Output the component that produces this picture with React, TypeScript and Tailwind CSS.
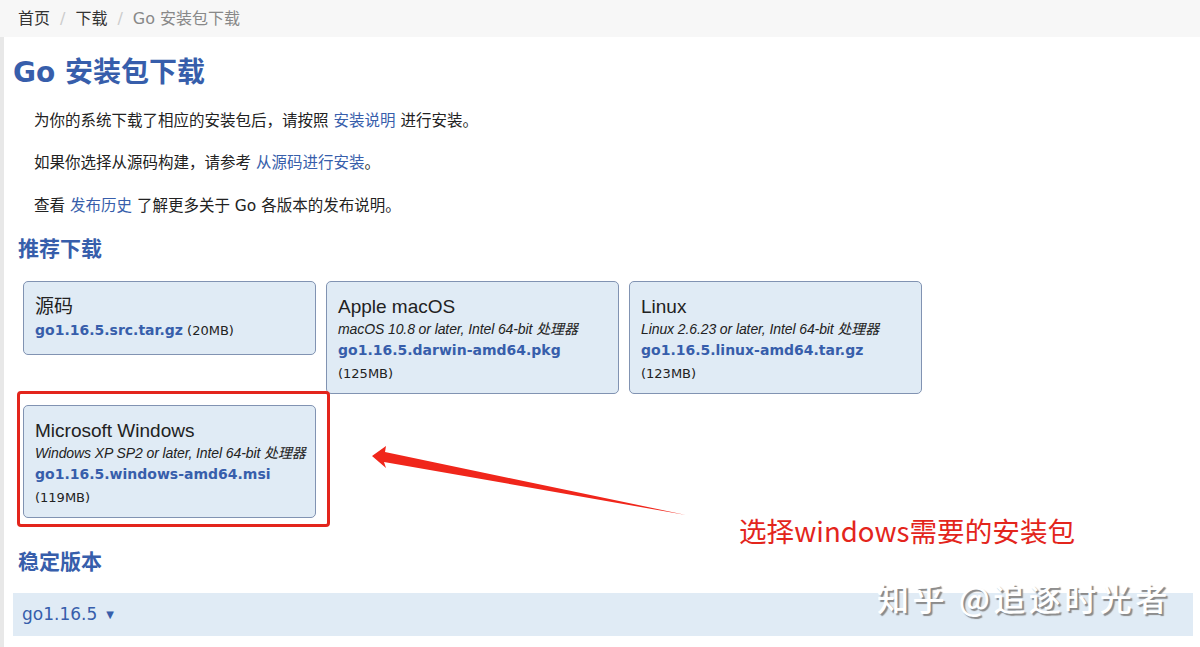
const sans = "font-['Tahoma','DejaVu_Sans','Noto_Sans_CJK_SC',sans-serif]";

type Pkg = {
  os: string;
  note?: string;
  file: string;
  size: string;
  inline?: boolean;
};

const featured: Pkg[] = [
  { os: "源码", file: "go1.16.5.src.tar.gz", size: "(20MB)", inline: true },
  {
    os: "Apple macOS",
    note: "macOS 10.8 or later, Intel 64-bit 处理器",
    file: "go1.16.5.darwin-amd64.pkg",
    size: "(125MB)",
  },
  {
    os: "Linux",
    note: "Linux 2.6.23 or later, Intel 64-bit 处理器",
    file: "go1.16.5.linux-amd64.tar.gz",
    size: "(123MB)",
  },
];

const windows: Pkg = {
  os: "Microsoft Windows",
  note: "Windows XP SP2 or later, Intel 64-bit 处理器",
  file: "go1.16.5.windows-amd64.msi",
  size: "(119MB)",
};

function DownloadCard({ pkg }: { pkg: Pkg }) {
  return (
    <div
      className={`w-[293px] self-start rounded-[5px] border border-[#8193b2] bg-[#e0ebf5] px-[11px] pt-[13px] text-[#222] ${
        pkg.inline ? "pb-[12px]" : "pb-[8px]"
      }`}
    >
      <div className="font-['Liberation_Sans','Noto_Sans_CJK_SC',sans-serif] text-[19px] leading-[24px]">
        {pkg.os}
      </div>
      {pkg.note && (
        <div className="whitespace-nowrap font-['Liberation_Sans','Noto_Sans_CJK_SC',sans-serif] text-[14px] italic leading-[20px] tracking-[-0.1px]">
          {pkg.note}
        </div>
      )}
      <div className="text-[13px] leading-[22px]">
        <a className="text-[14px] font-bold text-[#375eab]">{pkg.file}</a>
        {pkg.inline ? <span> {pkg.size}</span> : <div className="pt-[1px]">{pkg.size}</div>}
      </div>
    </div>
  );
}

export default function App() {
  return (
    <div className={`relative h-[647px] w-[1200px] overflow-hidden bg-white ${sans}`}>
      {/* Breadcrumb */}
      <div className="flex h-[37px] items-center bg-[#f7f7f7] pl-[18px] text-[16px] text-[#333]">
        <a>首页</a>
        <span className="px-[10px] text-[#ccc]">/</span>
        <a>下载</a>
        <span className="px-[10px] text-[#ccc]">/</span>
        <span className="text-[#888]">Go 安装包下载</span>
      </div>

      <div className="h-[610px] border-l-[4px] border-[#e8e8e8] pl-[9px]">
        <h1 className="pt-[18px] text-[28px] font-bold leading-[36px] text-[#375eab]">Go 安装包下载</h1>

        <div className="pl-[21px] text-[15.5px] leading-[20px] text-[#222]">
          <p className="mt-[20px]">
            为你的系统下载了相应的安装包后，请按照 <a className="text-[#375eab]">安装说明</a> 进行安装。
          </p>
          <p className="mt-[22px]">
            如果你选择从源码构建，请参考 <a className="text-[#375eab]">从源码进行安装</a>。
          </p>
          <p className="mt-[23px]">
            查看 <a className="text-[#375eab]">发布历史</a> 了解更多关于 Go 各版本的发布说明。
          </p>
        </div>

        <h2 className="mt-[20px] pl-[5px] text-[21px] font-bold leading-[26px] text-[#375eab]">推荐下载</h2>

        <div className="mt-[19px] flex gap-[10px] pl-[10px]">
          {featured.map((p) => (
            <DownloadCard key={p.os} pkg={p} />
          ))}
        </div>

        <div className="relative mt-[11px] pl-[10px]">
          <DownloadCard pkg={windows} />
          {/* annotation box */}
          <div className="pointer-events-none absolute top-[-14px] left-[4px] h-[136px] w-[313px] rounded-[4px] border-[3px] border-[#e3251c]" />
        </div>

        <h2 className="mt-[31px] pl-[5px] text-[21px] font-bold leading-[26px] text-[#375eab]">稳定版本</h2>

        <div className="mt-[18px] flex h-[43px] w-[1180px] items-center bg-[#e0ebf5] pl-[9px] text-[17px] text-[#375eab]">
          go1.16.5
          <span className="ml-[9px] text-[10px] text-[#375eab]">▼</span>
        </div>
      </div>

      {/* red arrow annotation */}
      <svg className="absolute top-0 left-0" width="1200" height="647" viewBox="0 0 1200 647">
        <path
          d="M372 456 L386 446 L385 452 L686 515 L384 462 L386 468 Z"
          fill="#f0261b"
        />
      </svg>
      <div className="absolute top-[512px] left-[739px] font-['Noto_Sans_CJK_SC',sans-serif] text-[27.6px] leading-[36px] text-[#e3251c]">
        选择windows需要的安装包
      </div>

      {/* watermark */}
      <div className="absolute top-[577px] left-[877px] font-['Noto_Sans_CJK_SC',sans-serif] text-[32px] font-medium leading-[40px] tracking-[3.5px] text-white [text-shadow:2px_2px_1px_#8a8a8a]">
        知乎 @追逐时光者
      </div>
    </div>
  );
}
